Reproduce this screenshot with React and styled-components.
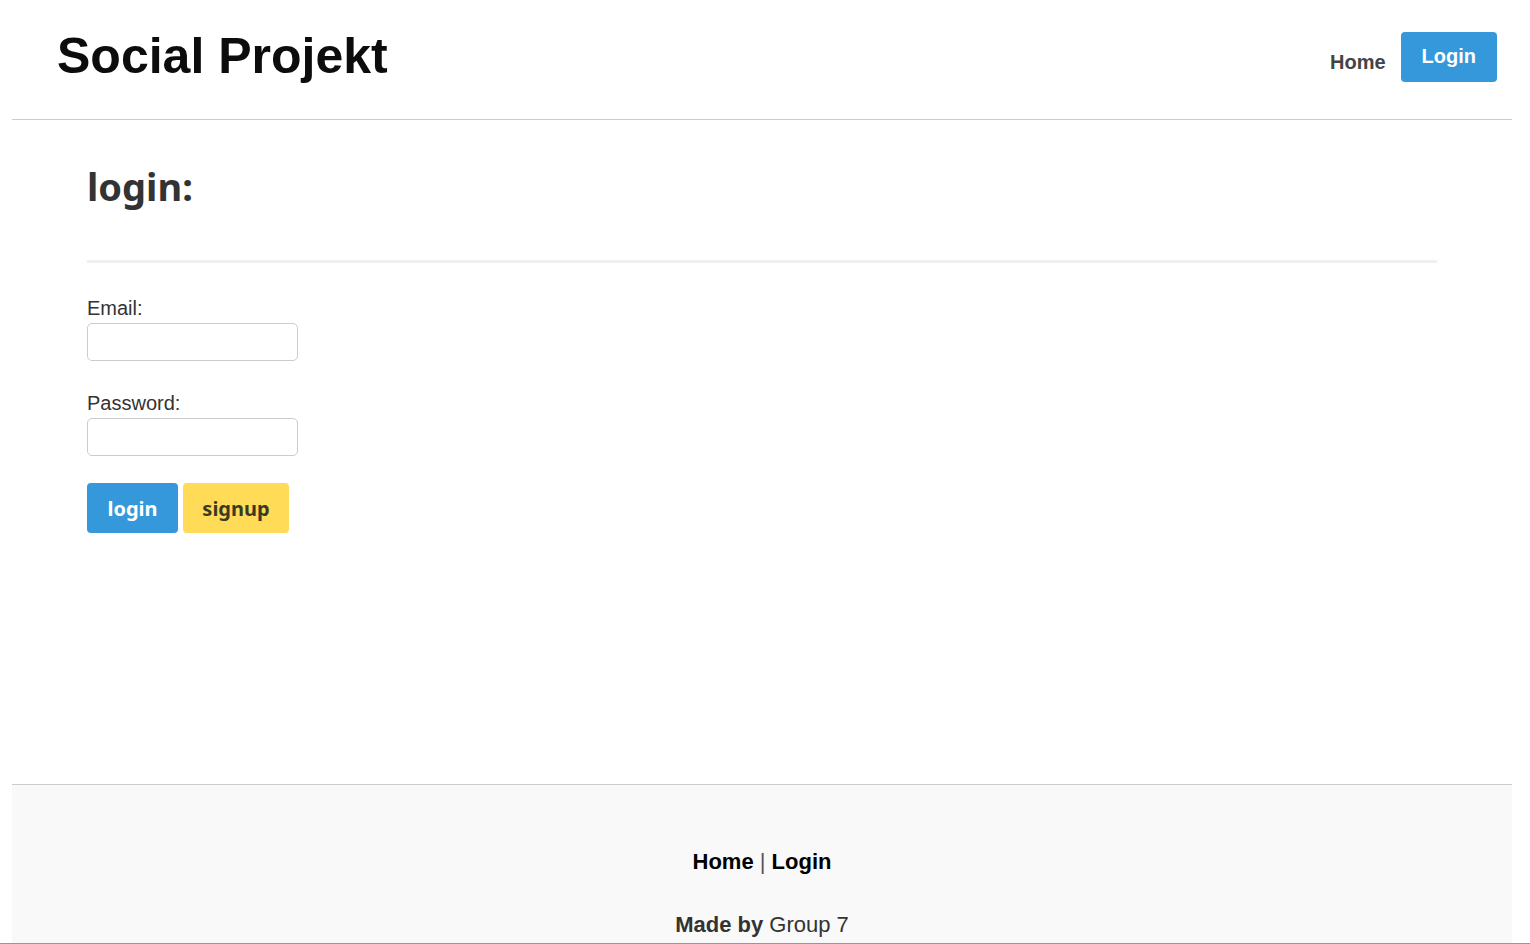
import React, { useState } from 'react';
import styled, { createGlobalStyle } from 'styled-components';

const GlobalStyle = createGlobalStyle`
  body {
    margin: 0;
    background: #fff;
    font-family: "Liberation Sans", Arial, sans-serif;
    color: #333;
  }
`;

function App() {
  const [email, setEmail] = useState('');
  const [password, setPassword] = useState('');

  return (
    <>
      <GlobalStyle />
      <Page>
        <Header>
          <Title>Social Projekt</Title>
          <Nav>
            <NavLink href="#">Home</NavLink>
            <NavButton href="#">Login</NavButton>
          </Nav>
        </Header>

        <Main>
          <Heading>login:</Heading>
          <Rule />
          <Form onSubmit={e => e.preventDefault()}>
            <Field>
              <Label htmlFor="email">Email:</Label>
              <Input id="email" type="email" value={email} onChange={e => setEmail(e.target.value)} />
            </Field>
            <Field>
              <Label htmlFor="password">Password:</Label>
              <Input id="password" type="password" value={password} onChange={e => setPassword(e.target.value)} />
            </Field>
            <Buttons>
              <Button type="submit">login</Button>
              <Button type="button" variant="yellow">signup</Button>
            </Buttons>
          </Form>
        </Main>

        <Footer>
          <FooterLinks>
            <FooterLink href="#">Home</FooterLink>
            <Pipe> | </Pipe>
            <FooterLink href="#">Login</FooterLink>
          </FooterLinks>
          <Credit><b>Made by</b> Group 7</Credit>
        </Footer>
      </Page>
      <BottomLine />
    </>
  );
}

export default App;

const Page = styled.div`
  width: 1500px;
  margin: 0 0 0 12px;
`;

const Header = styled.header`
  display: flex;
  justify-content: space-between;
  align-items: flex-start;
  height: 88px;
  padding: 31px 15px 0 45px;
  border-bottom: 1px solid #ccc;
`;

const Title = styled.h1`
  margin: 0;
  font-size: 50px;
  line-height: 50px;
  font-weight: bold;
  color: #0c0c0c;
`;

const Nav = styled.nav`
  display: flex;
  align-items: flex-start;
  gap: 15px;
  margin-top: 1px;
`;

const NavLink = styled.a`
  margin-top: 20px;
  font-size: 20px;
  line-height: 20px;
  font-weight: bold;
  color: #444;
  text-decoration: none;
`;

const NavButton = styled.a`
  display: block;
  height: 50px;
  box-sizing: border-box;
  padding: 14px 21px 16px;
  background: #3498db;
  border-radius: 4px;
  color: #fff;
  font-size: 20px;
  line-height: 20px;
  font-weight: bold;
  text-decoration: none;
`;

const Main = styled.main`
  padding: 44px 75px 251px;
`;

const Heading = styled.h2`
  margin: 0;
  font-family: "Noto Sans", "Open Sans", sans-serif;
  font-size: 38px;
  line-height: 44px;
  font-weight: bold;
  color: #333;
`;

const Rule = styled.div`
  height: 3px;
  margin-top: 52px;
  background: #f0f0f0;
`;

const Form = styled.form`
  display: flex;
  flex-direction: column;
  align-items: flex-start;
  padding-top: 34px;
`;

const Field = styled.div`
  display: flex;
  flex-direction: column;
  gap: 4px;
  margin-bottom: 31px;

  & + & {
    margin-bottom: 27px;
  }
`;

const Label = styled.label`
  font-size: 20px;
  line-height: 22px;
  color: #333;
`;

const Input = styled.input`
  width: 211px;
  height: 38px;
  box-sizing: border-box;
  border: 1px solid #ccc;
  border-radius: 5px;
  padding: 0 8px;
  font-size: 16px;
  font-family: inherit;
  outline: none;
`;

const Buttons = styled.div`
  display: flex;
  gap: 5px;
`;

const Button = styled.button`
  width: ${p => (p.variant === 'yellow' ? '106px' : '91px')};
  height: 50px;
  padding: 0;
  border: none;
  border-radius: 4px;
  background: ${p => (p.variant === 'yellow' ? '#ffdb58' : '#3498db')};
  color: ${p => (p.variant === 'yellow' ? '#3a3a22' : '#fff')};
  font-family: "Noto Sans", "Open Sans", sans-serif;
  font-size: 20px;
  font-weight: bold;
  cursor: pointer;
`;

const Footer = styled.footer`
  border-top: 1px solid #ccc;
  background: #f9f9f9;
  padding: 64px 0 40px;
  text-align: center;
`;

const FooterLinks = styled.p`
  margin: 0 0 38px;
  font-size: 22px;
  line-height: 25px;
`;

const FooterLink = styled.a`
  color: #000;
  font-weight: bold;
  text-decoration: none;
`;

const Pipe = styled.span`
  color: #555;
  white-space: pre;
`;

const Credit = styled.p`
  margin: 0;
  font-size: 22px;
  line-height: 25px;
  color: #333;
`;

const BottomLine = styled.div`
  position: fixed;
  left: 0;
  right: 0;
  bottom: 0;
  height: 1px;
  background: #7cbb22;
`;
